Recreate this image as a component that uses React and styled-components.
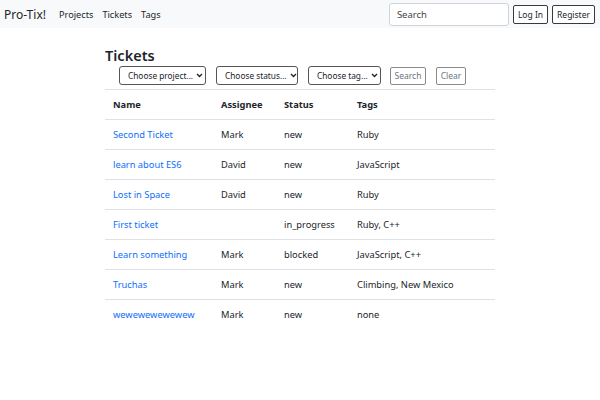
import React from 'react'
import styled, { createGlobalStyle } from 'styled-components'

const Global = createGlobalStyle`
  body {
    margin: 0;
    font-family: "Noto Sans", sans-serif;
    color: #212529;
    background: #fff;
  }
`

const Nav = styled.nav`
  display: flex;
  align-items: center;
  height: 28px;
  padding: 0 5px 0 4px;
  background: #f8f9fa;
`

const Brand = styled.span`
  font-size: 12px;
  margin-right: 13px;
`

const NavLink = styled.span`
  font-size: 9.2px;
  margin-right: 9px;
`

const NavRight = styled.div`
  margin-left: auto;
  display: flex;
  align-items: center;
  gap: 4px;
`

const SearchInput = styled.div`
  width: 111px;
  height: 21px;
  border: 1px solid #ced4da;
  border-radius: 3px;
  background: #fff;
  font-size: 9.5px;
  color: #444;
  display: flex;
  align-items: center;
  padding-left: 7px;
  margin-right: 0;
`

const Button = styled.span`
  display: inline-flex;
  align-items: center;
  justify-content: center;
  white-space: nowrap;
  box-sizing: border-box;
  height: ${p => p.$h || 18}px;
  width: ${p => (p.$w ? `${p.$w}px` : 'auto')};
  padding: 0 4px;
  border: 1px solid ${p => (p.$muted ? '#8a8a8a' : '#343a40')};
  color: ${p => (p.$muted ? '#6c757d' : '#212529')};
  border-radius: 2px;
  font-size: 8.5px;
  background: #fff;
  margin-right: ${p => p.$mr || 0}px;
`

const Main = styled.main`
  width: 390px;
  margin: 0 auto;
  padding-top: 18px;
`

const Title = styled.h1`
  margin: 0 0 2px;
  font-size: 14.5px;
  font-weight: 600;
  line-height: 18px;
`

const Filters = styled.div`
  display: flex;
  align-items: center;
  padding: 0 0 4px 14px;
  border-bottom: 1px solid #dee2e6;
`

const Select = styled.span`
  display: inline-flex;
  align-items: center;
  justify-content: space-between;
  white-space: nowrap;
  width: ${p => p.$w}px;
  height: 19px;
  padding: 0 5px 0 8px;
  box-sizing: border-box;
  border: 1px solid #555;
  border-radius: 3px;
  font-size: 8.3px;
  margin-right: ${p => p.$mr || 10}px;
  svg { margin-left: 3px; flex: none; }
`

const Table = styled.table`
  width: 100%;
  border-collapse: collapse;
  font-size: 9.3px;
  th, td {
    text-align: left;
    height: 29px;
    padding: 0 8px;
    border-bottom: 1px solid #dee2e6;
    white-space: nowrap;
  }
  th { font-weight: 700; }
  tbody tr:last-child td { border-bottom: none; }
`

const Link = styled.span`
  color: #0d6efd;
`

const Chevron = () => (
  <svg width="7" height="5" viewBox="0 0 7 5">
    <path d="M1 1l2.5 2.5L6 1" fill="none" stroke="#222" strokeWidth="1.3" />
  </svg>
)

const tickets = [
  ['Second Ticket', 'Mark', 'new', 'Ruby'],
  ['learn about ES6', 'David', 'new', 'JavaScript'],
  ['Lost in Space', 'David', 'new', 'Ruby'],
  ['First ticket', '', 'in_progress', 'Ruby, C++'],
  ['Learn something', 'Mark', 'blocked', 'JavaScript, C++'],
  ['Truchas', 'Mark', 'new', 'Climbing, New Mexico'],
  ['wewewewewewew', 'Mark', 'new', 'none'],
]

export default function App() {
  return (
    <>
      <Global />
      <Nav>
        <Brand>Pro-Tix!</Brand>
        <NavLink>Projects</NavLink>
        <NavLink>Tickets</NavLink>
        <NavLink>Tags</NavLink>
        <NavRight>
          <SearchInput>Search</SearchInput>
          <Button $h={19}>Log In</Button>
          <Button $h={19}>Register</Button>
        </NavRight>
      </Nav>
      <Main>
        <Title>Tickets</Title>
        <Filters>
          <Select $w={87}>Choose project... <Chevron /></Select>
          <Select $w={82}>Choose status... <Chevron /></Select>
          <Select $w={73} $mr={9}>Choose tag... <Chevron /></Select>
          <Button $muted $w={36} $mr={10}>Search</Button>
          <Button $muted $w={30}>Clear</Button>
        </Filters>
        <Table>
          <colgroup>
            <col style={{ width: 108 }} />
            <col style={{ width: 63 }} />
            <col style={{ width: 73 }} />
            <col />
          </colgroup>
          <thead>
            <tr>
              <th>Name</th>
              <th>Assignee</th>
              <th>Status</th>
              <th>Tags</th>
            </tr>
          </thead>
          <tbody>
            {tickets.map(t => (
              <tr key={t[0]}>
                <td><Link>{t[0]}</Link></td>
                <td>{t[1]}</td>
                <td>{t[2]}</td>
                <td>{t[3]}</td>
              </tr>
            ))}
          </tbody>
        </Table>
      </Main>
    </>
  )
}
